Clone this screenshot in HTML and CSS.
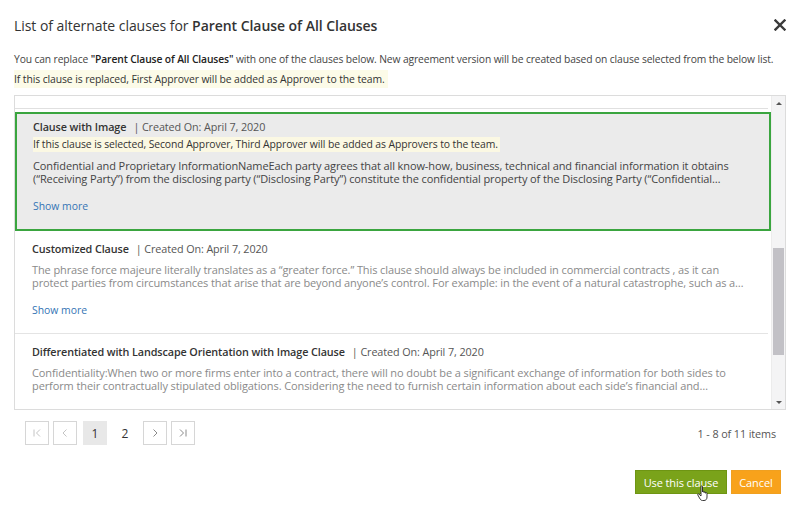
FILE: index.html
```html
<!DOCTYPE html>
<html>
<head>
<meta charset="utf-8">
<link rel="stylesheet" href="styles.css">
</head>
<body>
<div class="dialog">
  <div class="header">
    <h1 class="title">List of alternate clauses for <b>Parent Clause of All Clauses</b></h1>
    <svg class="close" width="12" height="12" viewBox="0 0 12 12"><path d="M1.5 1.5 L10.5 10.5 M10.5 1.5 L1.5 10.5" stroke="#3a3a3a" stroke-width="2.4" stroke-linecap="square"/></svg>
  </div>
  <p class="intro">You can replace <b>"Parent Clause of All Clauses"</b> with one of the clauses below. New agreement version will be created based on clause selected from the below list.</p>
  <p class="warn">If this clause is replaced, First Approver will be added as Approver to the team.</p>

  <div class="list">
    <div class="items">
      <div class="item partial"></div>
      <div class="item selected">
        <div class="item-head"><span class="name">Clause with Image</span><span class="created">| Created On: April 7, 2020</span></div>
        <div class="note">If this clause is selected, Second Approver, Third Approver will be added as Approvers to the team.</div>
        <div class="body dark">Confidential and Proprietary InformationNameEach party agrees that all know-how, business, technical and financial information it obtains (“Receiving Party”) from the disclosing party (“Disclosing Party”) constitute the confidential property of the Disclosing Party (“Confidential…</div>
        <a class="more">Show more</a>
      </div>
      <div class="item">
        <div class="item-head"><span class="name">Customized Clause</span><span class="created">| Created On: April 7, 2020</span></div>
        <div class="body">The phrase force majeure literally translates as a “greater force.” This clause should always be included in commercial contracts , as it can protect parties from circumstances that arise that are beyond anyone’s control. For example: in the event of a natural catastrophe, such as a…</div>
        <a class="more">Show more</a>
      </div>
      <div class="item">
        <div class="item-head"><span class="name">Differentiated with Landscape Orientation with Image Clause</span><span class="created">| Created On: April 7, 2020</span></div>
        <div class="body">Confidentiality:When two or more firms enter into a contract, there will no doubt be a significant exchange of information for both sides to perform their contractually stipulated obligations. Considering the need to furnish certain information about each side’s financial and…</div>
        <a class="more">Show more</a>
      </div>
    </div>
    <div class="scrollbar">
      <span class="arrow up"></span>
      <span class="track"><span class="thumb"></span></span>
      <span class="arrow down"></span>
    </div>
  </div>

  <div class="pager">
    <div class="pages">
      <span class="pbtn"><svg width="10" height="10" viewBox="0 0 10 10"><path d="M2 1.5 V8.5 M8 1.5 L4.5 5 L8 8.5" stroke="#c4c4c4" fill="none" stroke-width="1"/></svg></span>
      <span class="pbtn"><svg width="10" height="10" viewBox="0 0 10 10"><path d="M6.5 1.5 L3 5 L6.5 8.5" stroke="#c4c4c4" fill="none" stroke-width="1"/></svg></span>
      <span class="pnum active">1</span>
      <span class="pnum second">2</span>
      <span class="pbtn"><svg width="10" height="10" viewBox="0 0 10 10"><path d="M3.5 1.5 L7 5 L3.5 8.5" stroke="#8a8a8a" fill="none" stroke-width="1"/></svg></span>
      <span class="pbtn"><svg width="10" height="10" viewBox="0 0 10 10"><path d="M8 1.5 V8.5 M2 1.5 L5.5 5 L2 8.5" stroke="#8a8a8a" fill="none" stroke-width="1"/></svg></span>
    </div>
    <span class="count">1 - 8 of 11 items</span>
  </div>

  <div class="actions">
    <span class="btn primary">Use this clause
      <svg class="cursor" width="14" height="17" viewBox="0 0 14 17"><path d="M4 1.5 C4 0.7 5.5 0.7 5.5 1.5 V7 C5.5 6 7 6 7 7 V7.6 C7 6.7 8.5 6.7 8.5 7.6 V8.2 C8.5 7.4 10 7.4 10 8.3 V12 C10 14 9 15.5 7 15.5 H5.5 C4 15.5 3.4 14.5 2.5 13 L0.8 10 C0.3 9.2 1.4 8.4 2 9.1 L4 11 Z" fill="#fff" stroke="#222" stroke-width="0.9" stroke-linejoin="round"/></svg>
    </span>
    <span class="btn cancel">Cancel</span>
  </div>
</div>
</body>
</html>
```

FILE: styles.css
```css
* { box-sizing: border-box; }
html, body { margin: 0; padding: 0; background: #fff; }
body {
  font-family: "Open Sans", "Noto Sans", sans-serif;
  color: #333;
  width: 800px;
  height: 509px;
  overflow: hidden;
}
.dialog { padding: 0 14px 0 14px; }
.header {
  display: flex;
  align-items: center;
  justify-content: space-between;
  height: 30px;
  margin-top: 10px;
}
.title {
  margin: 0;
  font-size: 14px;
  font-weight: 400;
  color: #333;
  letter-spacing: -0.05px;
}
.title b { font-weight: 600; }
.close { margin-right: 0; }
.intro {
  margin: 12px 0 0 0;
  font-size: 10.3px;
  line-height: 14px;
  color: #444;
  letter-spacing: -0.12px;
  white-space: nowrap;
}
.intro b { font-weight: 600; color: #222; }
.warn {
  margin: 4px 0 0 0;
  width: fit-content;
  padding: 2px 3px 2px 0;
  background: #fcfbe8;
  font-size: 10.4px;
  line-height: 14px;
  color: #333;
  letter-spacing: -0.1px;
}
.list {
  margin-top: 7px;
  height: 315px;
  border: 1px solid #dcdcdc;
  display: flex;
  overflow: hidden;
}
.items {
  flex: 1;
  overflow: hidden;
}
.item {
  padding: 11px 16px 16px 17px;
  border-bottom: 1px solid #e4e4e4;
  margin-right: 3px;
}
.item.partial {
  height: 13px;
  padding: 0;
  border-bottom: 1px solid #e0e0e0;
  margin-bottom: 3px;
}
.item.selected {
  background: #ebebeb;
  border: 2px solid #3aa53f;
  padding: 6px 15px 16px 16px;
  margin-right: 0;
}
.item-head {
  font-size: 10.8px;
  line-height: 14px;
  letter-spacing: -0.1px;
  color: #333;
}
.name { font-weight: 600; color: #333; margin-right: 7px; }
.created { color: #555; }
.note {
  margin-top: 3px;
  width: fit-content;
  background: #fbf8e3;
  font-size: 10.4px;
  line-height: 15px;
  padding: 0 2px 0 0;
  letter-spacing: -0.1px;
  color: #333;
}
.body {
  margin-top: 8px;
  font-size: 11px;
  line-height: 12.5px;
  color: #8a8a8a;
  letter-spacing: -0.1px;
}
.body.dark { color: #444; }
.more {
  display: block;
  margin-top: 14px;
  font-size: 10.4px;
  line-height: 14px;
  color: #3575b5;
}
.scrollbar {
  width: 14px;
  display: flex;
  flex-direction: column;
  align-items: center;
  background: #f4f4f5;
  border-left: 1px solid #ececec;
}
.arrow {
  width: 0; height: 0;
  border-left: 3px solid transparent;
  border-right: 3px solid transparent;
}
.arrow.up { border-bottom: 3px solid #555; margin-top: 6px; }
.arrow.down { border-top: 3px solid #555; margin-bottom: 5px; }
.track { flex: 1; width: 100%; display: flex; justify-content: center; padding-top: 143px; }
.thumb { width: 11px; height: 107px; background: #c2c1c6; }
.pager {
  display: flex;
  justify-content: space-between;
  align-items: center;
  margin-top: 11px;
  padding: 0 11px;
}
.pages { display: flex; gap: 4px; align-items: center; }
.pbtn, .pnum {
  width: 24px;
  height: 24px;
  display: flex;
  align-items: center;
  justify-content: center;
  font-size: 12px;
  color: #333;
}
.pbtn { border: 1px solid #d6d6d6; }
.pnum.active { background: #e8e8e8; margin-left: 2px; }
.pnum.second { margin: 0 2px; }
.count { font-size: 10.8px; color: #555; letter-spacing: -0.1px; margin-right: -1px; }
.actions {
  display: flex;
  justify-content: flex-end;
  gap: 4px;
  margin-top: 25px;
  padding-right: 5px;
}
.btn {
  height: 24px;
  display: flex;
  align-items: center;
  justify-content: center;
  color: #fff;
  font-size: 11px;
  letter-spacing: -0.1px;
}
.btn.primary {
  width: 92px;
  background: #7aa31a;
  border: 1px solid #6e9513;
  position: relative;
}
.btn.cancel {
  width: 50px;
  background: #f8a21b;
  border: 1px solid #f0a020;
}
.cursor { position: absolute; left: 61px; top: 14px; }
```
